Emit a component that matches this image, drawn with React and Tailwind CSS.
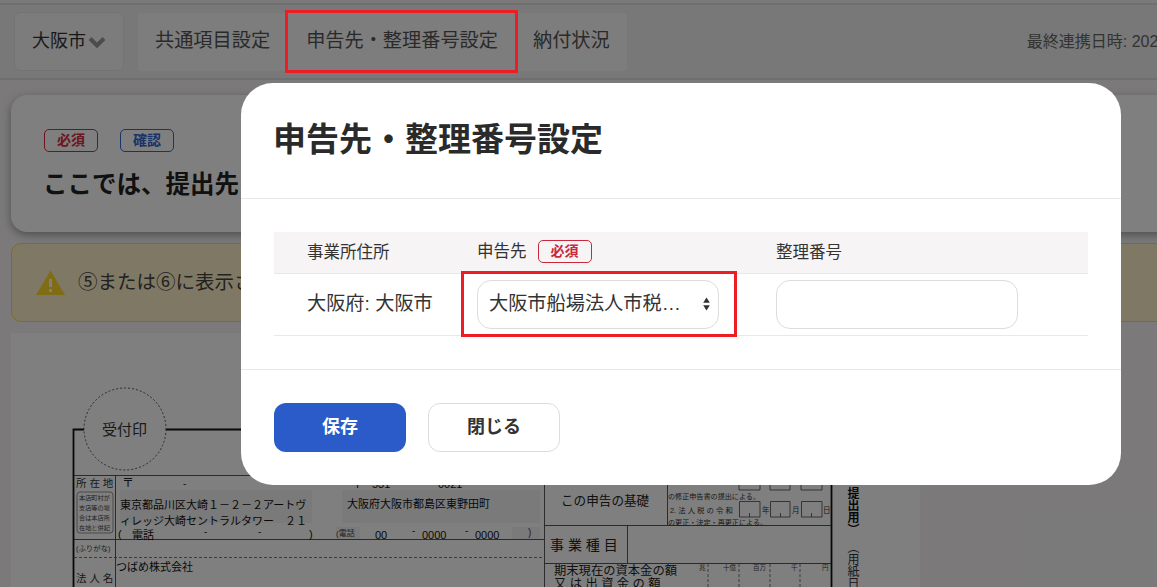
const TAX_FORM_TEXT = [
  { x: 102, y: 435, size: 15, fill: '#333', text: '受付印' },
  { x: 76, y: 487, size: 10.5, fill: '#333', text: '所 在 地' },
  { x: 122, y: 487, size: 12, fill: '#222', text: '〒' },
  { x: 183, y: 487, size: 10, fill: '#333', text: '-' },
  { x: 352, y: 488, size: 11, fill: '#111', text: '〒' },
  { x: 372, y: 488, size: 11, fill: '#111', text: '531' },
  { x: 438, y: 488, size: 11, fill: '#111', text: '0021' },
  { x: 79, y: 500, size: 6.2, fill: '#444', text: '本店町村が' },
  { x: 79, y: 510, size: 6.2, fill: '#444', text: '支店等の場' },
  { x: 79, y: 520, size: 6.2, fill: '#444', text: '合は本店所' },
  { x: 79, y: 530, size: 6.2, fill: '#444', text: '在地と併記' },
  { x: 120, y: 509, size: 11, fill: '#111', text: '東京都品川区大崎１－２－２アートヴ' },
  { x: 120, y: 525, size: 11, fill: '#111', text: 'ィレッジ大崎セントラルタワー　２１' },
  { x: 118, y: 538, size: 11, fill: '#111', text: '(' },
  { x: 132, y: 539, size: 11, fill: '#111', text: '電話' },
  { x: 204, y: 535, size: 10, fill: '#333', text: '-' },
  { x: 258, y: 535, size: 10, fill: '#333', text: '-' },
  { x: 309, y: 538, size: 11, fill: '#111', text: ')' },
  { x: 347, y: 508, size: 11, fill: '#111', text: '大阪府大阪市都島区東野田町' },
  { x: 336, y: 536, size: 8, fill: '#444', text: '(電話' },
  { x: 375, y: 539, size: 11, fill: '#111', text: '00' },
  { x: 412, y: 534, size: 10, fill: '#333', text: '-' },
  { x: 422, y: 539, size: 11, fill: '#111', text: '0000' },
  { x: 465, y: 534, size: 10, fill: '#333', text: '-' },
  { x: 475, y: 539, size: 11, fill: '#111', text: '0000' },
  { x: 528, y: 536, size: 10, fill: '#444', text: ')' },
  { x: 76, y: 551, size: 7.4, fill: '#444', text: '(ふりがな)' },
  { x: 116, y: 571, size: 11, fill: '#111', text: 'つばめ株式会社' },
  { x: 76, y: 582, size: 10.5, fill: '#333', text: '法 人 名' },
  { x: 561, y: 505, size: 12.6, fill: '#222', text: 'この申告の基礎' },
  { x: 668, y: 499, size: 7.1, fill: '#333', text: 'の修正申告書の提出による。' },
  { x: 670, y: 513, size: 7.4, fill: '#333', text: '2. 法 人 税 の 令 和' },
  { x: 668, y: 525, size: 7.1, fill: '#333', text: 'の更正・決定・再更正による。' },
  { x: 762, y: 513, size: 7.5, fill: '#333', text: '年' },
  { x: 792, y: 513, size: 7.5, fill: '#333', text: '月' },
  { x: 823, y: 513, size: 7.5, fill: '#333', text: '日' },
  { x: 550, y: 550, size: 14, fill: '#222', text: '事 業 種 目' },
  { x: 554, y: 575, size: 12.3, fill: '#222', text: '期末現在の資本金の額' },
  { x: 554, y: 588, size: 12.3, fill: '#222', text: '又 は 出 資 金 の 額' },
  { x: 699, y: 570, size: 6.5, fill: '#444', text: '兆' },
  { x: 723, y: 570, size: 6.5, fill: '#444', text: '十億' },
  { x: 753, y: 570, size: 6.5, fill: '#444', text: '百万' },
  { x: 791, y: 570, size: 6.5, fill: '#444', text: '千' },
  { x: 822, y: 570, size: 6.5, fill: '#444', text: '円' },
  { x: 852, y: 487, size: 12, fill: '#111', weight: 700, vertical: true, text: '提出用）' },
  { x: 852, y: 541, size: 12, fill: '#333', vertical: true, text: '（用紙日' },
];

// the tax form preview behind the dialog, in page coordinates
const TaxForm = () => (
  <svg viewBox="11 333 909 254" width="909" height="254" className="block">
    <rect x="120" y="490" width="192" height="33" fill="#f4f4f4" />
    <rect x="342" y="490" width="198" height="33" fill="#f4f4f4" />
    <rect x="336" y="527" width="24" height="12" fill="#f4f4f4" />
    <rect x="512" y="527" width="28" height="12" fill="#f4f4f4" />
    <path d="M84 429.5H73.5V587M166 429.5H241M831.5 429V587" fill="none" stroke="#111" strokeWidth="1.8" />
    <path d="M74 475.5H544.5M74 539.5H544.5M545 525.5H831M545 563.5H831M115.5 475V587M544.5 475V587M627.5 525V563M667.5 475V525" fill="none" stroke="#444" strokeWidth="0.9" />
    <path d="M74 557.5H544" fill="none" stroke="#555" strokeWidth="0.8" strokeDasharray="3 2" />
    <circle cx="125" cy="429" r="41" fill="#fff" stroke="#444" strokeWidth="0.9" strokeDasharray="2 2" />
    <path d="M739 474V490H760V474M770 474V490H790V474M801 474V490H822V474" fill="none" stroke="#444" strokeWidth="0.8" />
    <path d="M739.5 501.5H760V517H739.5ZM770.5 501.5H790V517H770.5ZM801.5 501.5H822V517H801.5ZM749.5 513V517M780.5 513V517M811.5 513V517" fill="none" stroke="#444" strokeWidth="0.8" />
    <path d="M708 564V587M739 564V587M770 564V587M800 564V587" fill="none" stroke="#555" strokeWidth="0.8" strokeDasharray="3 2" />
    <rect x="77" y="492" width="36" height="41" rx="3" fill="none" stroke="#666" strokeWidth="0.7" />
    {TAX_FORM_TEXT.map((t) => (
      <text
        key={`${t.x}-${t.y}-${t.text}`}
        x={t.x}
        y={t.y}
        fontSize={t.size}
        fill={t.fill}
        fontWeight={t.weight || 400}
        writingMode={t.vertical ? 'vertical-rl' : undefined}
      >
        {t.text}
      </text>
    ))}
  </svg>
);

const Badge = ({ label, color }) => (
  <span className={`flex h-[23px] w-[54px] items-center justify-center rounded-[5px] border bg-white text-[14px] font-bold ${color}`}>
    {label}
  </span>
);

const Page = () => (
  <div className="h-full overflow-hidden bg-[#f6f3f3] pt-[3px]">
    {/* Top bar */}
    <header className="flex h-[77px] w-[1400px] items-center border-y-2 border-y-[#dedede] bg-[#f0f0f0] pl-[14px] text-[#555]">
      <div className="flex h-[59px] w-[110px] items-center rounded-md border border-[#e6e6e6] bg-[#f8f8f8] pl-[17px] text-[18px] text-[#333]">
        大阪市
        <svg width="18" height="12" viewBox="0 0 18 12" className="ml-[2px]">
          <path d="M2 2.5 9 9.5l7-7" fill="none" stroke="#989898" strokeWidth="4" />
        </svg>
      </div>
      <nav className="ml-[14px] flex h-[58px] items-center rounded bg-[#fbfbfb] pl-[17px] pr-[17px] text-[19.2px]">
        <span>共通項目設定</span>
        <span className="ml-[36px]">申告先・整理番号設定</span>
        <span className="ml-[35px]">納付状況</span>
      </nav>
      <span className="ml-[400px] whitespace-nowrap text-[16px] text-[#666]">最終連携日時: 2024/04/01 10:00</span>
    </header>

    <main className="pl-[11px] pt-[15px]">
      {/* Intro card */}
      <section className="h-[137px] w-[1180px] rounded-[16px] bg-white pl-[33px] pt-[34px] shadow-[0_3px_8px_rgba(0,0,0,0.35)]">
        <div className="flex gap-[22px]">
          <Badge label="必須" color="border-[#d92b40] text-[#d92b40]" />
          <Badge label="確認" color="border-[#3566d0] text-[#3566d0]" />
        </div>
        <h2 className="-ml-px mt-[15px] text-[24.5px] font-bold text-[#222]">ここでは、提出先を確認してください。</h2>
      </section>

      {/* Warning */}
      <section className="mt-[11px] flex h-[79px] w-[1180px] items-center rounded-[10px] border border-[#ffd455] bg-[#fff1c9] pl-[24px] text-[19.5px] text-[#444]">
        <svg width="29" height="25" viewBox="0 0 29 25">
          <path d="M14.5 0.5 29 25H0Z" fill="#ffd828" />
          <path d="M13 9h3v8h-3zM13 19h3v3h-3z" fill="#fff" />
        </svg>
        <span className="ml-[13px] whitespace-nowrap">⑤または⑥に表示される内容を確認してください。</span>
      </section>

      <section className="mt-[11px] w-[909px] bg-white">
        <TaxForm />
      </section>
    </main>
  </div>
);

const Dialog = () => (
  <div className="absolute left-[241px] top-[83px] w-[880px] rounded-[32px] bg-white text-[#333]">
    <div className="flex h-[116px] items-center border-b border-[#e8e8e8] pb-[2px] pl-[32px]">
      <h1 className="text-[33px] font-bold text-[#2a2a2a]">申告先・整理番号設定</h1>
    </div>

    <div className="border-b border-[#e8e8e8] px-[33px] py-[33px]">
      <div className="grid grid-cols-[203px_299px_1fr] text-[16.5px]">
        <div className="flex h-[42px] items-center border-b border-[#e8e8e8] bg-[#f6f4f5] pl-[33px]">事業所住所</div>
        <div className="flex h-[42px] items-center border-b border-[#e8e8e8] bg-[#f6f4f5] pb-[2px]">
          申告先
          <span className="ml-[11px] flex h-[23px] w-[54px] items-center justify-center rounded-[5px] border border-[#c9283c] text-[14px] font-bold text-[#c9283c]">
            必須
          </span>
        </div>
        <div className="flex h-[42px] items-center border-b border-[#e8e8e8] bg-[#f6f4f5]">整理番号</div>

        <div className="flex h-[62px] items-center border-b border-[#e8e8e8] pl-[33px] text-[19.2px]">大阪府: 大阪市</div>
        <div className="flex h-[62px] items-center border-b border-[#e8e8e8]">
          <div className="relative">
            <select className="h-[49px] w-[242px] appearance-none truncate rounded-[14px] border border-[#dcdcdc] bg-white pl-[11px] pr-[30px] text-[19.2px] text-[#333]">
              <option>大阪市船場法人市税事務所</option>
            </select>
            <svg width="7" height="14" viewBox="0 0 7 14" className="pointer-events-none absolute right-[9px] top-[17px]">
              <path d="M3.5 0.5 6.8 5.8H0.2ZM3.5 13.5 0.2 8.2H6.8Z" fill="#333" />
            </svg>
          </div>
        </div>
        <div className="flex h-[62px] items-center border-b border-[#e8e8e8]">
          <input className="h-[49px] w-[242px] rounded-[14px] border border-[#dcdcdc] bg-white" />
        </div>
      </div>
    </div>

    <div className="flex gap-[22px] p-[33px]">
      <button className="h-[49px] w-[132px] rounded-[12px] bg-[#2a5bc8] text-[18px] font-bold text-white">保存</button>
      <button className="h-[49px] w-[132px] rounded-[12px] border border-[#dcdcdc] bg-white text-[18px] font-bold text-[#333]">閉じる</button>
    </div>

    {/* annotation around the select */}
    <div className="absolute left-[220px] top-[188px] h-[66px] w-[276px] border-[3px] border-[#ee1c25]" />
  </div>
);

export default function App() {
  return (
    <div className="relative h-[587px] w-[1157px] overflow-hidden font-['Liberation_Sans','Noto_Sans_CJK_JP',sans-serif]">
      <Page />
      <div className="absolute inset-0 bg-black/50" />
      <div className="absolute left-[285px] top-[10px] h-[63px] w-[233px] border-[3px] border-[#ee1c25]" />
      <Dialog />
    </div>
  );
}
